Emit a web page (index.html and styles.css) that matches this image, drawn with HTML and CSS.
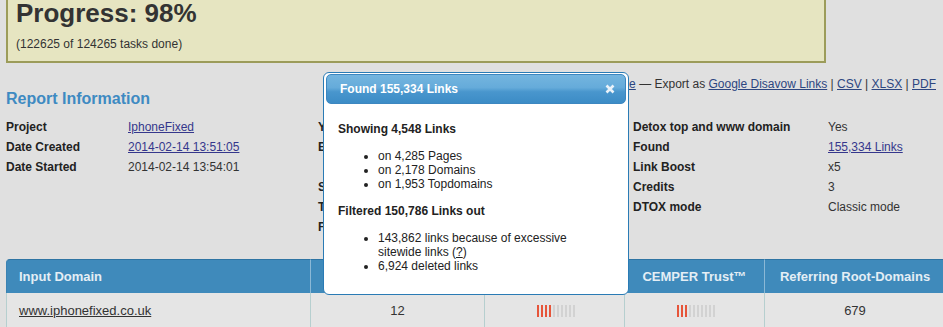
FILE: index.html
```html
<!DOCTYPE html>
<html>
<head>
<meta charset="utf-8">
<title>Report</title>
<link rel="stylesheet" href="styles.css">
</head>
<body>
<div class="page">
  <div class="progress">
    <h1 class="progress-title">Progress: 98%</h1>
    <p class="progress-sub">(122625 of 124265 tasks done)</p>
  </div>

  <div class="export"><a href="#">Go to the Link Table</a> — Export as <a href="#">Google Disavow Links</a> | <a href="#">CSV</a> | <a href="#">XLSX</a> | <a href="#">PDF</a></div>

  <h2 class="section-title">Report Information</h2>

  <div class="info">
    <table class="info-table info-a">
      <tr><th>Project</th><td><a href="#">IphoneFixed</a></td></tr>
      <tr><th>Date Created</th><td><a href="#">2014-02-14 13:51:05</a></td></tr>
      <tr><th>Date Started</th><td>2014-02-14 13:54:01</td></tr>
    </table>
    <table class="info-table info-b">
      <tr><th>Your Reference</th><td></td></tr>
      <tr><th>Exclude</th><td></td></tr>
      <tr><th>&nbsp;</th><td></td></tr>
      <tr><th>Search</th><td></td></tr>
      <tr><th>Type</th><td></td></tr>
      <tr><th>Filter</th><td></td></tr>
    </table>
    <table class="info-table info-c">
      <tr><th>Detox top and www domain</th><td>Yes</td></tr>
      <tr><th>Found</th><td><a href="#">155,334 Links</a></td></tr>
      <tr><th>Link Boost</th><td>x5</td></tr>
      <tr><th>Credits</th><td>3</td></tr>
      <tr><th>DTOX mode</th><td>Classic mode</td></tr>
    </table>
  </div>

  <table class="results">
    <colgroup>
      <col class="c-domain"><col class="c-links"><col class="c-power"><col class="c-trust"><col class="c-root">
    </colgroup>
    <thead>
      <tr>
        <th class="left">Input Domain</th>
        <th>Links</th>
        <th>Power</th>
        <th>CEMPER Trust™</th>
        <th>Referring Root-Domains</th>
      </tr>
    </thead>
    <tbody>
      <tr>
        <td class="left"><a class="domain" href="#">www.iphonefixed.co.uk</a></td>
        <td>12</td>
        <td><span class="meter"><i class="on"></i><i class="on"></i><i class="on"></i><i class="on"></i><i></i><i></i><i></i><i></i><i></i><i></i></span></td>
        <td><span class="meter"><i class="on"></i><i class="on"></i><i class="on"></i><i></i><i></i><i></i><i></i><i></i><i></i><i></i></span></td>
        <td>679</td>
      </tr>
    </tbody>
  </table>
</div>

<div class="dialog">
  <div class="dialog-bar">
    <span class="dialog-title">Found 155,334 Links</span>
    <span class="dialog-close">
      <svg width="10" height="10" viewBox="0 0 10 10"><path d="M1.5 1.5 L8.5 8.5 M8.5 1.5 L1.5 8.5" stroke="#eaf2f9" stroke-width="2.6" stroke-linecap="butt" fill="none"/></svg>
    </span>
  </div>
  <div class="dialog-body">
    <p class="dialog-head">Showing 4,548 Links</p>
    <ul class="dialog-list">
      <li>on 4,285 Pages</li>
      <li>on 2,178 Domains</li>
      <li>on 1,953 Topdomains</li>
    </ul>
    <p class="dialog-head">Filtered 150,786 Links out</p>
    <ul class="dialog-list">
      <li>143,862 links because of excessive sitewide links (<a href="#">?</a>)</li>
      <li>6,924 deleted links</li>
    </ul>
  </div>
</div>
</body>
</html>
```

FILE: styles.css
```css
html, body {
  margin: 0;
  padding: 0;
}
body {
  width: 943px;
  height: 327px;
  overflow: hidden;
  background: #e0e0e0;
  font-family: "Liberation Sans", Arial, sans-serif;
  font-size: 12px;
  color: #333;
  position: relative;
}
.page {
  padding: 0 7px 0 6px;
}
a {
  color: #35378c;
  text-decoration: underline;
}

/* progress */
.progress {
  margin-top: -12px;
  width: 800px;
  padding: 0 8px 10px 8px;
  border: 2px solid #9c9c5a;
  background: #e6e5c1;
}
.progress-title {
  margin: 8px 0 0 0;
  font-size: 26px;
  line-height: 30px;
  font-weight: bold;
  color: #333;
}
.progress-sub {
  margin: 9px 0 0 0;
  line-height: 14px;
  font-size: 12px;
  color: #333;
}

/* export line */
.export {
  margin-top: 14px;
  line-height: 14px;
  text-align: right;
  color: #333;
}
.export a {
  color: #2d4680;
}

.section-title {
  margin: -2px 0 0 0;
  font-size: 16px;
  line-height: 20px;
  font-weight: bold;
  color: #3e8ac2;
}

/* info columns */
.info {
  display: flex;
  align-items: flex-start;
  margin-top: 8px;
}
.info-table {
  border-collapse: collapse;
}
.info-table th,
.info-table td {
  padding: 0;
  height: 20px;
  line-height: 20px;
  text-align: left;
  vertical-align: middle;
  white-space: nowrap;
  font-size: 12px;
}
.info-table th {
  font-weight: bold;
  color: #222;
}
.info-table td {
  color: #333;
}
.info-a {
  width: 312px;
}
.info-a th {
  width: 122px;
}
.info-b {
  width: 315px;
}
.info-b th {
  width: 150px;
}
.info-c th {
  width: 195px;
}

/* results table */
.results {
  margin-top: 22px;
  width: 939px;
  table-layout: fixed;
  border-collapse: separate;
  border-spacing: 0;
}
.c-domain { width: 304px; }
.c-links { width: 174px; }
.c-power { width: 140px; }
.c-trust { width: 140px; }
.c-root { width: 181px; }

.results th {
  height: 33px;
  padding: 0;
  background: #3f8abb;
  color: #e4eef5;
  font-size: 13px;
  font-weight: bold;
  text-align: center;
  border-top: 1px solid #2e74a3;
  border-left: 1px solid #8bb8d6;
}
.results th:first-child {
  border-left: 1px solid #3a82b2;
  border-top-left-radius: 4px;
}
.results td {
  height: 34px;
  padding: 0;
  background: #e5e5e5;
  font-size: 13px;
  color: #333;
  text-align: center;
  border-left: 1px solid #b6cfcf;
}
.results .left {
  text-align: left;
  padding-left: 12px;
}
.domain {
  color: #333;
}
.meter {
  display: inline-flex;
  gap: 2px;
  vertical-align: middle;
  margin-left: 3px;
}
.meter i {
  display: block;
  width: 2px;
  height: 12px;
  background: #d2d2d2;
}
.meter i.on {
  background: #e6553a;
}

/* dialog overlay */
.dialog {
  position: absolute;
  left: 323px;
  top: 72px;
  width: 300px;
  height: 218px;
  padding: 1px 2px 2px 2px;
  background: #fff;
  border: 1px solid #2a7bb5;
  border-radius: 6px;
  z-index: 10;
}
.dialog-bar {
  display: flex;
  align-items: center;
  justify-content: space-between;
  height: 28px;
  padding: 0 10px 0 13px;
  border: 1px solid #3d87c0;
  border-radius: 5px;
  background: linear-gradient(#74b5df 0%, #65abda 45%, #4996cd 60%, #3c8cc6 100%);
}
.dialog-title {
  color: #fff;
  font-weight: bold;
  font-size: 12px;
}
.dialog-close {
  display: flex;
  align-items: center;
}
.dialog-body {
  padding: 6px 12px 0 12px;
  color: #222;
}
.dialog-head {
  margin: 12px 0;
  font-weight: bold;
  line-height: 14px;
}
.dialog-list {
  margin: 13px 0;
  padding: 0 30px 0 40px;
  line-height: 14px;
}
.dialog-list a {
  color: #222;
}
```
